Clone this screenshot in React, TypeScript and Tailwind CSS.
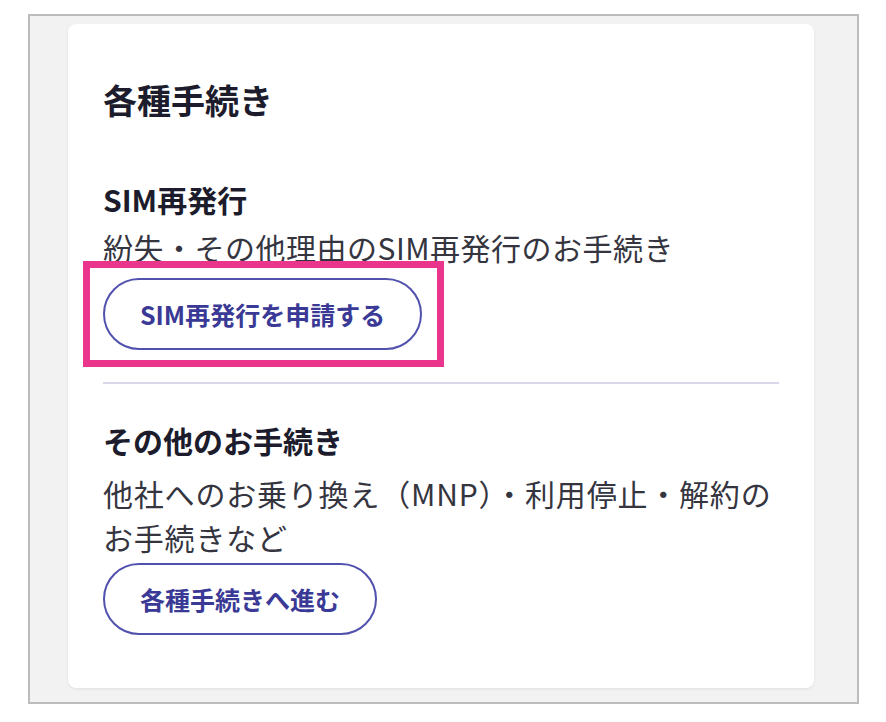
import React from "react";

const font = { fontFamily: '"Noto Sans CJK JP", "Noto Sans", sans-serif' };

function PillButton({ children }: { children: React.ReactNode }) {
  return (
    <button className="h-[72px] rounded-full border-2 border-[#5151ae] bg-white px-[35px] text-[25px] font-bold leading-none text-[#3a3a96]">
      {children}
    </button>
  );
}

export default function App() {
  return (
    <div className="h-[722px] w-[886px] bg-white pl-[28px] pt-[14px]" style={font}>
      <div className="flex h-[690px] w-[831px] flex-col border-2 border-[#bcbcbc] bg-[#f2f2f3] pb-[14px] pl-[38px] pr-[43px] pt-[8px]">
        <div className="flex flex-1 flex-col rounded-[8px] bg-white px-[35px] pb-[53px] pt-[52px] shadow-[0_1px_3px_rgba(0,0,0,0.08)]">
          <h1 className="text-[34px] font-bold leading-[48px] text-[#1c1c2c]">各種手続き</h1>

          <h2 className="mt-[53px] text-[30px] font-bold leading-[44px] text-[#1c1c2c]">SIM再発行</h2>
          <p className="mt-[4px] text-[30px] leading-[44px] tracking-[0.5px] text-[#35353f]">紛失・その他理由のSIM再発行のお手続き</p>
          <div className="mt-[9px] flex">
            <div className="relative">
              <PillButton>SIM再発行を申請する</PillButton>
              <div className="pointer-events-none absolute bottom-[-17px] left-[-20px] right-[-22px] top-[-17px] border-[7px] border-[#e9358c]" />
            </div>
          </div>

          <div className="mt-[32px] h-[2px] bg-[#d8d8ea]" />

          <h2 className="mt-[34px] text-[30px] font-bold leading-[44px] text-[#1c1c2c]">その他のお手続き</h2>
          <p className="mt-[9px] text-[30px] leading-[44px] tracking-[0.8px] text-[#35353f]">
            他社へのお乗り換え（MNP）・利用停止・解約の
            <br />
            お手続きなど
          </p>
          <div className="mt-[4px] flex">
            <PillButton>各種手続きへ進む</PillButton>
          </div>
        </div>
      </div>
    </div>
  );
}
